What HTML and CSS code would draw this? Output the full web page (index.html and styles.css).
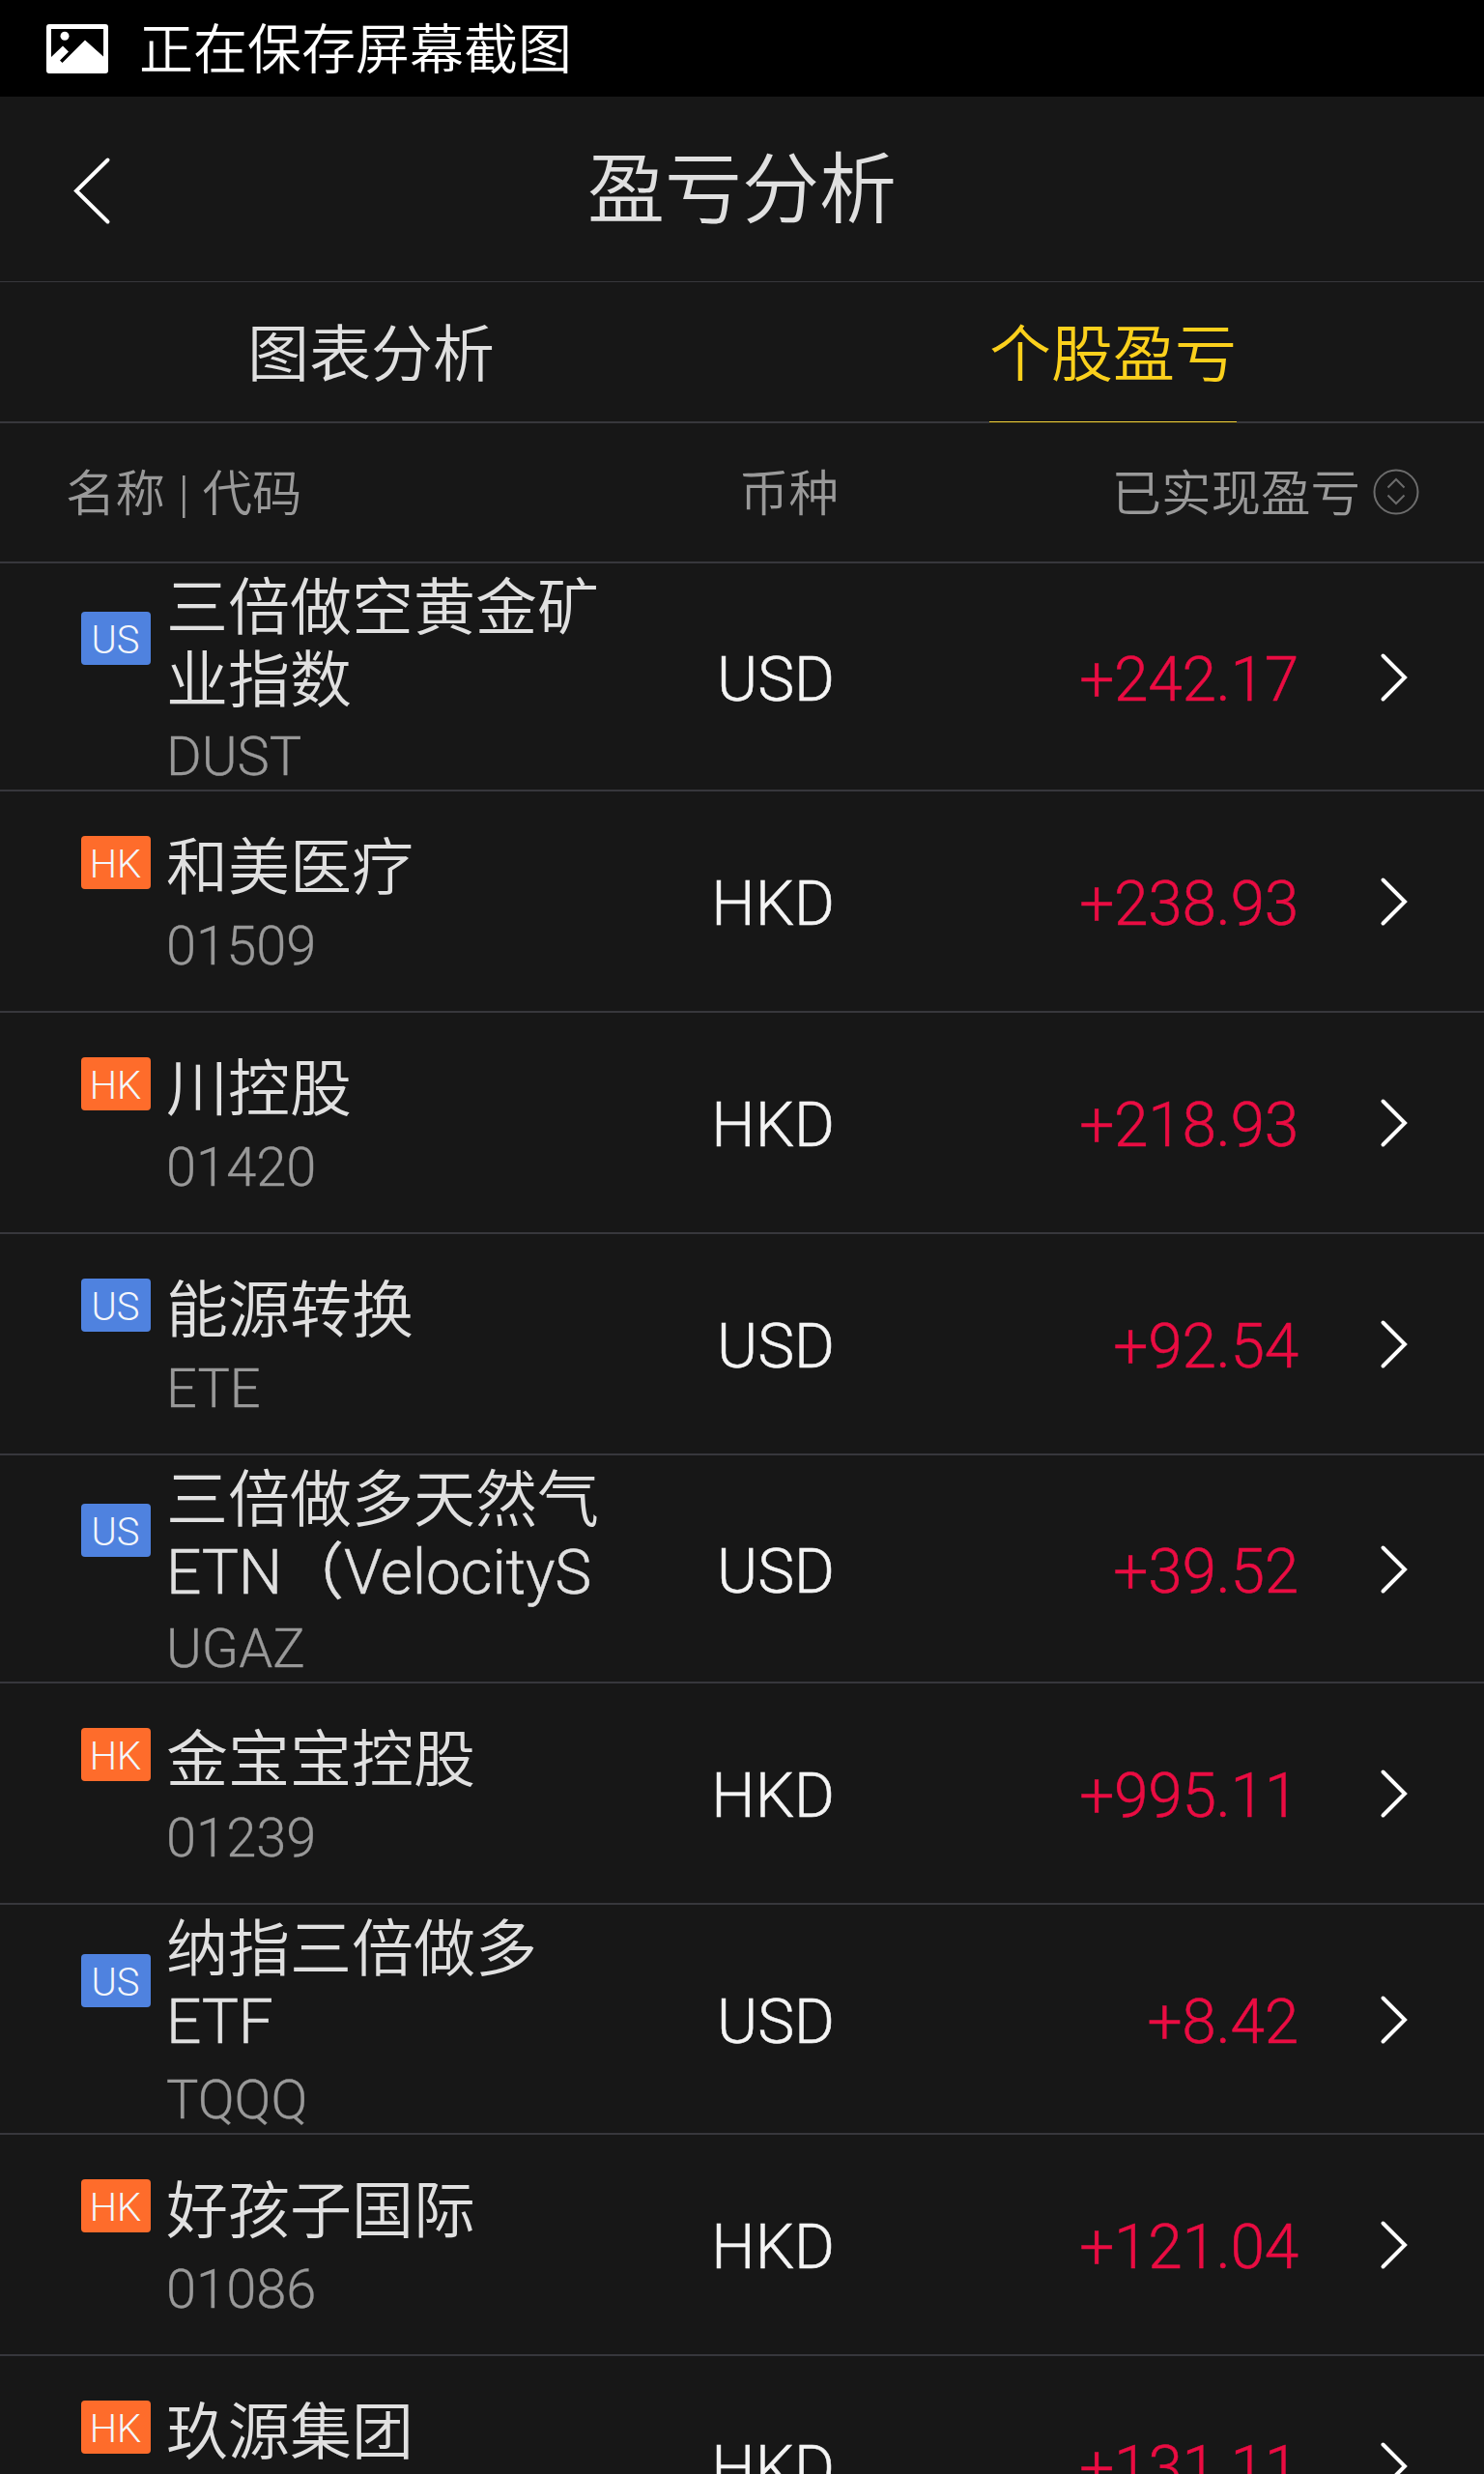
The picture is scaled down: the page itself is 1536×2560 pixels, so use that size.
FILE: index.html
```html
<!DOCTYPE html>
<html lang="zh-CN">
<head>
<meta charset="utf-8">
<title>盈亏分析</title>
<link rel="stylesheet" href="styles.css">
</head>
<body>
<svg class="defs" width="0" height="0" aria-hidden="true">
  <symbol id="chevron" viewBox="0 0 30 52"><path d="M3.5 3.5 26 26 3.5 48.5"/></symbol>
</svg>
<div class="status">
  <svg class="status-icon" viewBox="0 0 64 51"><path fill-rule="evenodd" d="M3 0H61Q64 0 64 3V48Q64 51 61 51H3Q0 51 0 48V3Q0 0 3 0ZM5 5V34L17 22.500 23 28.500 14 37.500 16.500 40 40 16.500 59 33.500V5Z"/><circle cx="19" cy="12.300" r="4.500"/></svg>
  <span class="status-text">正在保存屏幕截图</span>
</div>
<header class="header">
  <svg class="back" viewBox="0 0 42 72"><path d="M37.500 4.500 5 36.500 37.500 68.500"/></svg>
  <h1 class="title">盈亏分析</h1>
</header>
<nav class="tabs">
  <div class="tab"><span class="tab-label">图表分析</span></div>
  <div class="tab"><span class="tab-label active">个股盈亏</span></div>
</nav>
<div class="cols">
  <span class="col-name">名称 | 代码</span>
  <span class="col-currency">币种</span>
  <span class="col-pl">已实现盈亏</span>
  <svg class="sort" viewBox="0 0 48 48"><circle cx="24" cy="24" r="22.500"/><path d="M15.500 19.500 24 11 32.500 19.500M15.500 27.500 24 36 32.500 27.500"/></svg>
</div>
<main class="list">
  <section class="row tall"><span class="badge us">US</span><div class="stock"><div class="name">三倍做空黄金矿<br>业指数</div><div class="code">DUST</div></div><span class="currency">USD</span><span class="amount">+242.17</span><svg class="chev"><use href="#chevron"/></svg></section>
  <section class="row"><span class="badge hk">HK</span><div class="stock"><div class="name">和美医疗</div><div class="code">01509</div></div><span class="currency">HKD</span><span class="amount">+238.93</span><svg class="chev"><use href="#chevron"/></svg></section>
  <section class="row"><span class="badge hk">HK</span><div class="stock"><div class="name">川控股</div><div class="code">01420</div></div><span class="currency">HKD</span><span class="amount">+218.93</span><svg class="chev"><use href="#chevron"/></svg></section>
  <section class="row"><span class="badge us">US</span><div class="stock"><div class="name">能源转换</div><div class="code">ETE</div></div><span class="currency">USD</span><span class="amount">+92.54</span><svg class="chev"><use href="#chevron"/></svg></section>
  <section class="row tall"><span class="badge us">US</span><div class="stock"><div class="name">三倍做多天然气<br><span class="latin-text">ETN（VelocityS</span></div><div class="code">UGAZ</div></div><span class="currency">USD</span><span class="amount">+39.52</span><svg class="chev"><use href="#chevron"/></svg></section>
  <section class="row"><span class="badge hk">HK</span><div class="stock"><div class="name">金宝宝控股</div><div class="code">01239</div></div><span class="currency">HKD</span><span class="amount">+995.11</span><svg class="chev"><use href="#chevron"/></svg></section>
  <section class="row tall latin"><span class="badge us">US</span><div class="stock"><div class="name">纳指三倍做多<br><span class="latin-text">ETF</span></div><div class="code">TQQQ</div></div><span class="currency">USD</span><span class="amount">+8.42</span><svg class="chev"><use href="#chevron"/></svg></section>
  <section class="row"><span class="badge hk">HK</span><div class="stock"><div class="name">好孩子国际</div><div class="code">01086</div></div><span class="currency">HKD</span><span class="amount">+121.04</span><svg class="chev"><use href="#chevron"/></svg></section>
  <section class="row"><span class="badge hk">HK</span><div class="stock"><div class="name">玖源集团</div></div><span class="currency">HKD</span><span class="amount">+131.11</span><svg class="chev"><use href="#chevron"/></svg></section>
</main>
</body>
</html>
```

FILE: styles.css
```css
* { box-sizing: border-box; }
html, body { height: 2560px; overflow: hidden; }
body {
  margin: 0;
  background: #171717;
  color: #e0e0e0;
  font-family: Roboto, "Noto Sans CJK SC", sans-serif;
  font-weight: 350;
}
svg { display: block; flex: none; }
.defs { position: absolute; }

.status { display: flex; align-items: center; height: 100px; padding-left: 48px; background: #000; }
.status-icon { width: 64px; height: 51px; margin-top: 1px; fill: #fff; }
.status-text { margin: 3px 0 0 32px; font-size: 56px; line-height: 64px; color: #fff; }

.header {
  display: grid;
  grid-template-columns: 120px 1fr 120px;
  align-items: center;
  height: 192px;
  border-bottom: 1px solid #37373c;
}
.back { width: 42px; height: 72px; margin: 2px 0 0 74px; fill: none; stroke: #fff; stroke-width: 4; stroke-linecap: round; }
.title { margin: 3px 0 0; font-size: 80px; line-height: 94px; font-weight: 350; text-align: center; }

.tabs { display: grid; grid-template-columns: 1fr 1fr; height: 146px; border-bottom: 2px solid #37373c; }
.tab { display: flex; justify-content: center; }
.tab-label { height: 145px; font-size: 64px; line-height: 152px; }
.tab-label.active { color: #fbd01c; border-bottom: 1px solid #efcf3a; box-shadow: 0 1px 0 #2c260f; }

.cols { display: flex; align-items: center; height: 145px; padding-top: 4px; border-bottom: 2px solid #37373c; color: #999; font-size: 51.500px; line-height: 60px; }
.col-name { width: 500px; padding-left: 68px; word-spacing: 1px; }
.col-currency { width: 368px; text-align: right; }
.col-pl { width: 540px; text-align: right; }
.sort { width: 48px; height: 48px; margin: -5px 0 0 13px; fill: none; stroke: #6c6c6c; stroke-width: 2; }

.row { display: flex; align-items: center; height: 229px; border-bottom: 2px solid #37373c; }
.row.tall { height: 236px; }
.row.latin { height: 238px; }
.badge {
  align-self: flex-start;
  flex: none;
  width: 72px;
  height: 55px;
  margin: 46px 0 0 84px;
  padding-right: 1px;
  border-radius: 4px;
  color: #f4f6fb;
  font-size: 40px;
  font-weight: 300;
  line-height: 60px;
  text-align: center;
}
.tall .badge { margin-top: 50px; }
.latin .badge { margin-top: 51px; }
.us { background: #4f82df; }
.hk { background: #fe6c2b; }
.stock { align-self: flex-start; width: 476px; padding: 42px 0 0 16px; white-space: nowrap; }
.tall .stock { padding-top: 9px; }
.name { font-size: 64px; line-height: 75px; }
.latin-text { letter-spacing: -0.200px; -webkit-text-stroke: 0.500px currentColor; }
.code { margin-top: 10px; font-size: 56px; line-height: 66px; color: #999; -webkit-text-stroke: 0.300px currentColor; }
.tall .code { margin-top: 8px; }
.latin .code { margin-top: 10px; }
.currency, .amount { padding-top: 6px; font-size: 64px; line-height: 75px; text-align: right; -webkit-text-stroke: 0.500px currentColor; }
.currency { width: 232px; color: #f4f4f4; }
.amount { width: 480px; letter-spacing: -0.300px; color: #ea0c42; }
.chev { width: 30px; height: 52px; margin: 1px 0 0 84px; fill: none; stroke: #fff; stroke-width: 4; stroke-linecap: round; }
```
